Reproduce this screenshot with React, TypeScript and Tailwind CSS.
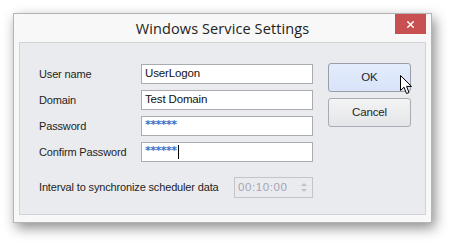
import { X } from 'lucide-react';

const fields = [
  { label: 'User name', value: 'UserLogon' },
  { label: 'Domain', value: 'Test Domain' },
  { label: 'Password', value: '******', secret: true },
  { label: 'Confirm Password', value: '******', secret: true, caret: true },
];

function Cursor() {
  return (
    <svg width="13" height="20" viewBox="0 0 13 20" className="absolute left-[71px] top-[11px]">
      <path
        d="M0.5 0.5 L0.5 15.5 L4 12.2 L6.5 18.5 L9 17.5 L6.6 11.4 L11.5 11.4 Z"
        fill="white"
        stroke="black"
        strokeWidth="1"
        strokeLinejoin="miter"
      />
    </svg>
  );
}

export default function App() {
  return (
    <div className="w-[452px] h-[244px] bg-white pl-[13px] pt-[13px] font-['Liberation_Sans',sans-serif]">
      <div className="w-[419px] h-[210px] bg-[#f8f8f8] border border-[#b4b4b4] shadow-[3px_5px_12px_rgba(0,0,0,0.45)] flex flex-col">
        {/* title bar */}
        <div className="relative h-[28px] flex items-center justify-center">
          <span className="font-['Open_Sans',sans-serif] text-[14.5px] text-[#222] tracking-[0.1px] mt-[1px]">Windows Service Settings</span>
          <div className="absolute right-[5px] top-0 w-[31px] h-[20px] bg-[#c75050] flex items-center justify-center">
            <X size={11} strokeWidth={3} className="text-white" />
          </div>
        </div>

        {/* client area */}
        <div className="mx-[5px] h-[173px] bg-[#eaebee] border border-[#d2d3d6] flex text-[11px] tracking-[-0.15px] text-[#1e1e1e]">
          <div className="flex flex-col pl-[19px] pt-[21px]">
            {fields.map((f) => (
              <div key={f.label} className="flex items-center h-[20px] mb-[6px]">
                <span className="w-[102px] whitespace-nowrap">{f.label}</span>
                <div className="w-[172px] h-[20px] bg-white border border-[#a9abb0] flex items-center px-[3px]">
                  {f.secret ? (
                    <span className="text-[#3a6fc4] text-[11px] tracking-[-0.5px] leading-none mt-[-3px] font-['DejaVu_Sans',sans-serif] font-bold">
                      {f.value}
                    </span>
                  ) : (
                    <span className="text-[#111] text-[11.5px]">{f.value}</span>
                  )}
                  {f.caret && <span className="w-[1px] h-[14px] bg-black ml-[1px]" />}
                </div>
              </div>
            ))}
            <div className="flex items-center mt-[9px]">
              <span className="w-[195px] whitespace-nowrap">Interval to synchronize scheduler data</span>
              <div className="w-[79px] h-[21px] border border-[#c4c5c8] bg-[#eaebee] flex items-center justify-between pl-[3px] pr-[5px]">
                <span className="text-[#a4a4b8] text-[11.5px] tracking-[0.6px]">00:10:00</span>
                <div className="flex flex-col items-center gap-[3px]">
                  <div className="w-0 h-0 border-l-[3px] border-r-[3px] border-b-[3px] border-l-transparent border-r-transparent border-b-[#c0c0c8]" />
                  <div className="w-0 h-0 border-l-[3px] border-r-[3px] border-t-[3px] border-l-transparent border-r-transparent border-t-[#c0c0c8]" />
                </div>
              </div>
            </div>
          </div>

          <div className="flex flex-col pl-[15px] pt-[20px] gap-[6px] text-[11.5px]">
            <div className="relative w-[83px] h-[29px] rounded-[3px] border border-[#9a9ea8] bg-gradient-to-b from-[#e4ecfb] to-[#d8e4fa] flex items-center justify-center">
              OK
              <Cursor />
            </div>
            <div className="w-[83px] h-[29px] rounded-[3px] border border-[#a8abb2] bg-gradient-to-b from-[#f4f4f5] to-[#e4e5e8] flex items-center justify-center">
              Cancel
            </div>
          </div>
        </div>
      </div>
    </div>
  );
}
